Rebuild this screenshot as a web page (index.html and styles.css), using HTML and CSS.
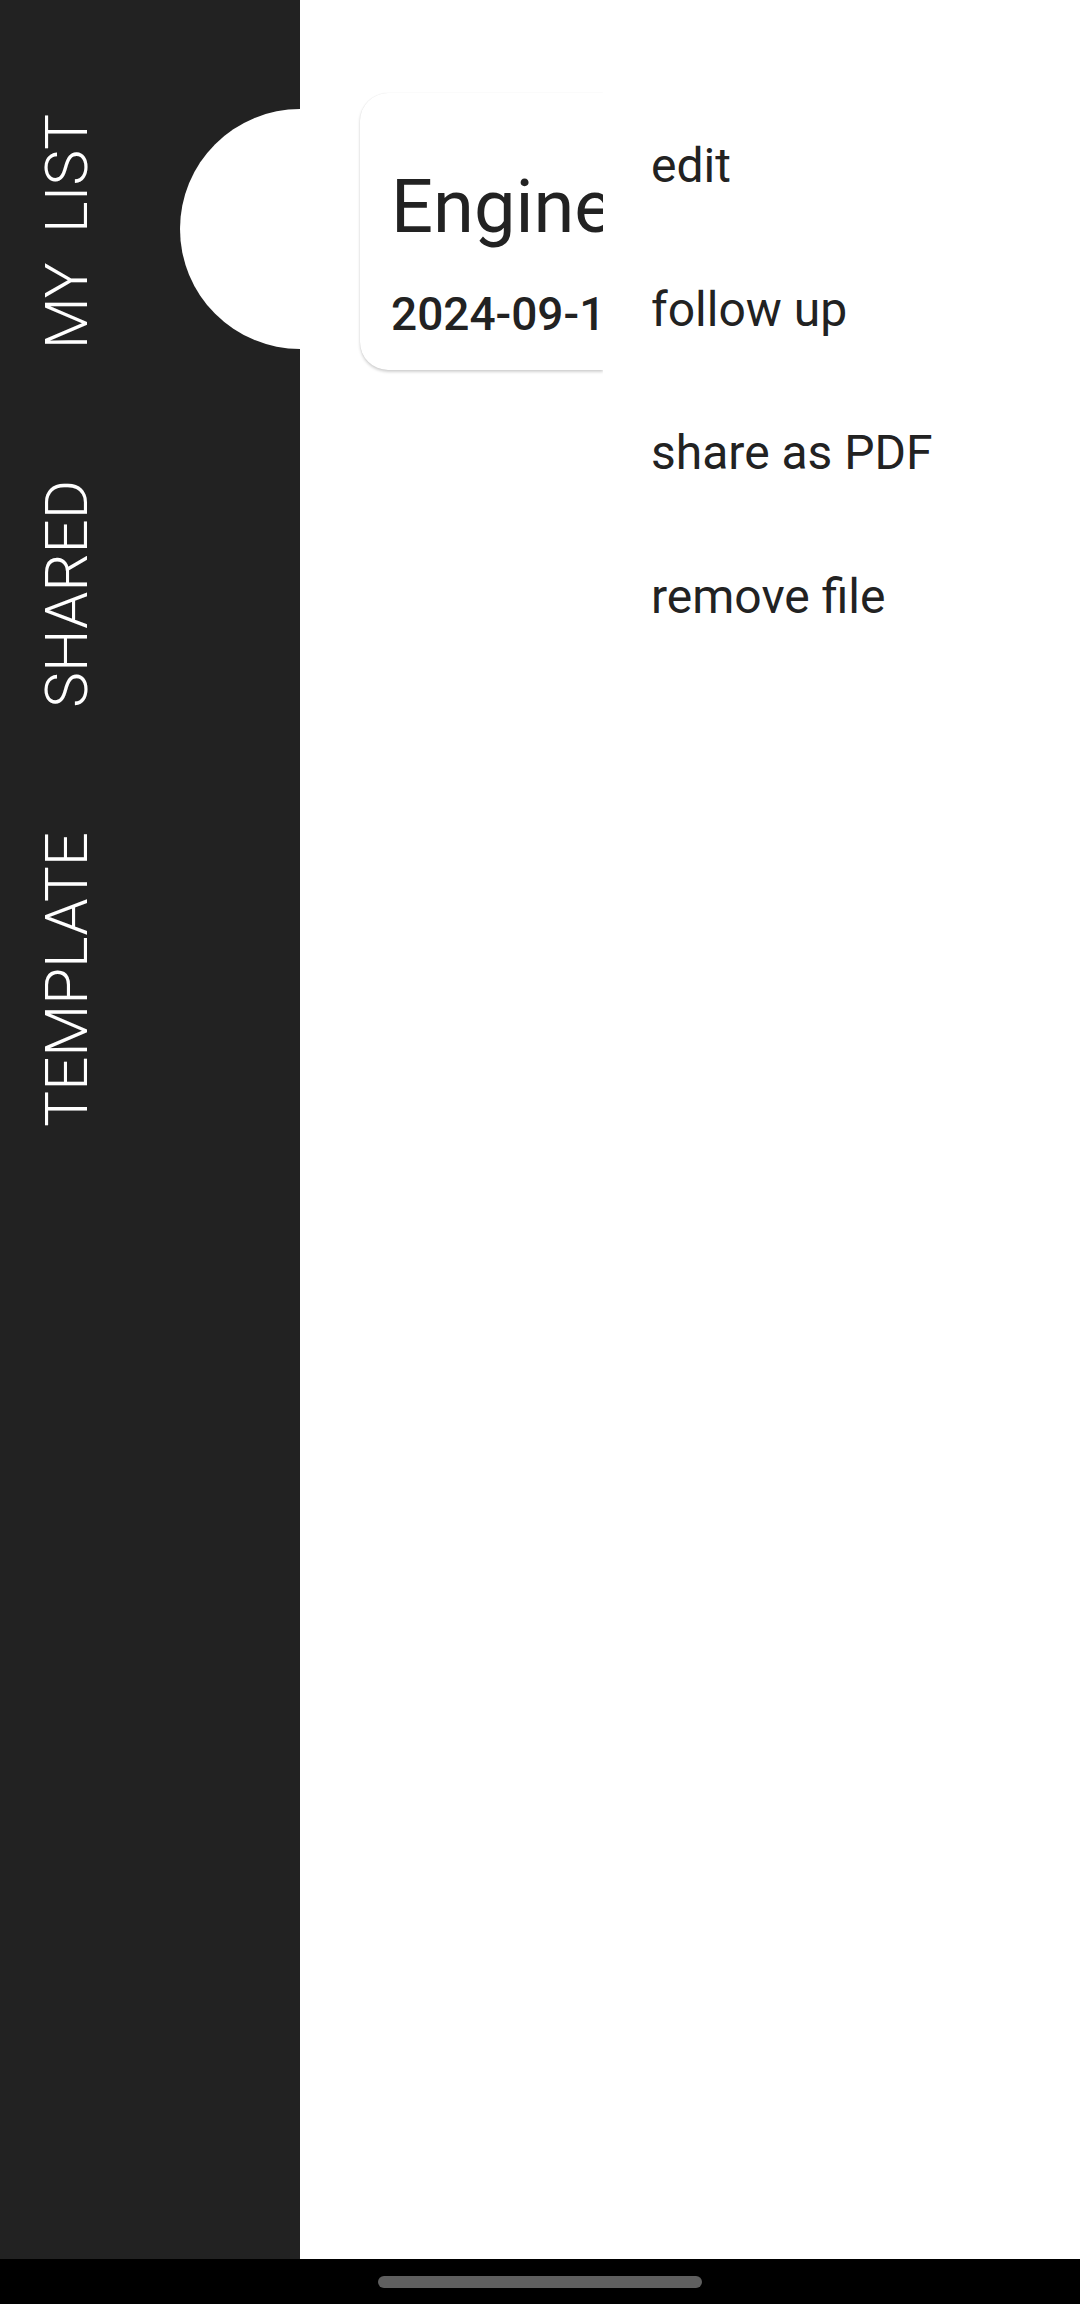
FILE: index.html
```html
<!DOCTYPE html>
<html lang="en">
<head>
<meta charset="utf-8">
<title>My List</title>
<link rel="stylesheet" href="styles.css">
</head>
<body>
<div class="screen">
  <div class="main">
    <nav class="sidebar">
      <div class="tab">MY&nbsp;&nbsp;LIST</div>
      <div class="tab">SHARED</div>
      <div class="tab tab-last">TEMPLATE</div>
      <div class="tab-indicator"></div>
    </nav>
    <section class="content">
      <article class="card">
        <div class="card-title">Engineering Notes</div>
        <div class="card-date">2024-09-13</div>
      </article>
      <ul class="menu">
        <li class="menu-item">edit</li>
        <li class="menu-item">follow up</li>
        <li class="menu-item">share as PDF</li>
        <li class="menu-item">remove file</li>
      </ul>
    </section>
  </div>
  <div class="navbar"><div class="handle"></div></div>
</div>
</body>
</html>
```

FILE: styles.css
```css
* { box-sizing: border-box; }
html, body {
  margin: 0;
  padding: 0;
  width: 1080px;
  height: 2304px;
  overflow: hidden;
  background: #fff;
  font-family: Roboto, "Noto Sans", "Liberation Sans", sans-serif;
}
.screen {
  width: 1080px;
  height: 2304px;
  display: grid;
  grid-template-rows: 1fr 45px;
}
.main {
  display: flex;
  min-height: 0;
}
.sidebar {
  position: relative;
  width: 300px;
  flex: 0 0 300px;
  background: #222222;
  display: flex;
  flex-direction: column;
  align-items: flex-start;
  padding-top: 114px;
  padding-left: 31px;
  gap: 131px;
}
.tab {
  writing-mode: vertical-rl;
  transform: rotate(180deg);
  color: #ffffff;
  font-size: 60px;
  font-weight: 300;
  line-height: normal;
  white-space: nowrap;
}
.tab-last {
  margin-top: -7px;
}
.tab-indicator {
  position: absolute;
  right: 0;
  top: 109px;
  width: 120px;
  height: 240px;
  background: #ffffff;
  border-radius: 120px 0 0 120px;
}
.content {
  position: relative;
  flex: 1;
  background: #fff;
  padding-top: 93px;
  padding-left: 60px;
}
.card {
  width: 243px;
  height: 277px;
  background: #fff;
  border-radius: 28px 0 0 28px;
  box-shadow: 0 2px 3px rgba(0,0,0,0.18), 0 0 1px rgba(0,0,0,0.12);
  padding: 70px 0 0 31px;
  overflow: hidden;
  color: #222;
}
.card-title {
  font-size: 74px;
  font-weight: 400;
  line-height: normal;
  white-space: nowrap;
}
.card-date {
  margin-top: 37px;
  font-size: 46px;
  font-weight: 500;
  line-height: normal;
  white-space: nowrap;
}
.menu {
  position: absolute;
  left: 303px;
  right: 0;
  top: 71px;
  margin: 0;
  padding: 23px 0 22px 48px;
  list-style: none;
  background: #fff;
}
.menu-item {
  height: 143.5px;
  line-height: 143.5px;
  font-size: 48px;
  color: #222;
  white-space: nowrap;
}
.navbar {
  background: #000;
  display: flex;
  justify-content: center;
  padding-top: 17px;
}
.handle {
  width: 324px;
  height: 12px;
  border-radius: 6px;
  background: #5f5f5f;
}
```
